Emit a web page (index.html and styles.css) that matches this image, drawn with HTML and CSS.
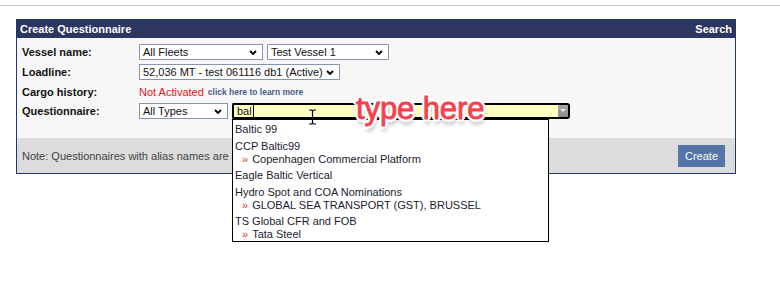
FILE: index.html
```html
<!DOCTYPE html>
<html lang="en">
<head>
  <meta charset="UTF-8">
  <title>Create Questionnaire</title>
  <link rel="stylesheet" href="styles.css">
</head>
<body>
  <div class="topline"></div>

  <div class="panel">
    <div class="panel-head">
      <span>Create Questionnaire</span>
      <span>Search</span>
    </div>

    <div class="panel-body">
      <div class="row">
        <label>Vessel name:</label>
        <div class="select fleet">All Fleets<svg class="chev" viewBox="0 0 8 5"><path d="M1 1 L4 4 L7 1"/></svg></div>
        <div class="select vessel">Test Vessel 1<svg class="chev" viewBox="0 0 8 5"><path d="M1 1 L4 4 L7 1"/></svg></div>
      </div>
      <div class="row">
        <label>Loadline:</label>
        <div class="select loadline">52,036 MT - test 061116 db1 (Active)<svg class="chev" viewBox="0 0 8 5"><path d="M1 1 L4 4 L7 1"/></svg></div>
      </div>
      <div class="row short">
        <label>Cargo history:</label>
        <span class="inactive">Not Activated</span>
        <a class="learn">click here to learn more</a>
      </div>
      <div class="row">
        <label>Questionnaire:</label>
        <div class="select types">All Types<svg class="chev" viewBox="0 0 8 5"><path d="M1 1 L4 4 L7 1"/></svg></div>
        <div class="combo">
          <div class="combo-input">bal<span class="caret"></span></div>
          <div class="combo-btn"><svg viewBox="0 0 6 4"><path d="M0 0 H6 L3 3 Z"/></svg></div>

          <svg class="ibeam" viewBox="0 0 9 16"><path d="M1 1 H3.5 L4.5 2 L5.5 1 H8 M4.5 2 V14 M1 15 H3.5 L4.5 14 L5.5 15 H8"/></svg>
          <div class="hint">type here</div>

          <ul class="suggest">
            <li>Baltic 99</li>
            <li>CCP Baltic99<span class="alias">Copenhagen Commercial Platform</span></li>
            <li>Eagle Baltic Vertical</li>
            <li>Hydro Spot and COA Nominations<span class="alias">GLOBAL SEA TRANSPORT (GST), BRUSSEL</span></li>
            <li>TS Global CFR and FOB<span class="alias">Tata Steel</span></li>
          </ul>
        </div>
      </div>
    </div>

    <div class="panel-foot">
      <span class="note">Note: Questionnaires with alias names are shown below.</span>
      <button class="create">Create</button>
    </div>
  </div>
</body>
</html>
```

FILE: styles.css
```css
* { box-sizing: border-box; }

body {
  margin: 0;
  min-height: 285px;
  background: #ffffff;
  font-family: 'Liberation Sans', Arial, sans-serif;
  font-size: 11px;
  color: #111;
}

.topline {
  margin-top: 5px;
  border-top: 1px solid #c8c8c8;
}

.panel {
  margin: 13px 0 0 16px;
  width: 720px;
  border: 1px solid #1d3a6a;
}

.panel-head {
  display: flex;
  justify-content: space-between;
  align-items: center;
  height: 18px;
  padding: 0 3px 0 3px;
  background: #2d3561;
  color: #fff;
  font-weight: bold;
  font-size: 11px;
}

.panel-body {
  background: #f7f7f7;
  padding: 6px 0 19px 5px;
}

.row {
  display: flex;
  align-items: center;
  height: 16px;
  margin-bottom: 4px;
}
.row:last-child { margin-bottom: 0; }
.row.short { height: 15px; }

.row label {
  width: 117px;
  font-weight: bold;
}

.select {
  display: flex;
  align-items: center;
  justify-content: space-between;
  height: 16px;
  padding: 0 5px 0 3px;
  margin-right: 4px;
  background: #fff;
  border: 1px solid #8795ad;
  white-space: nowrap;
}
.select.fleet { width: 124px; }
.select.vessel { width: 122px; }
.select.loadline { width: 201px; }
.select.types { width: 89px; margin-right: 4px; }

.chev {
  width: 8px;
  height: 5px;
  margin-left: 3px;
  fill: none;
  stroke: #000;
  stroke-width: 1.8;
}

.inactive { color: #e8141c; margin-right: 4px; }
.learn {
  color: #4b5d8c;
  font-weight: bold;
  font-size: 8.5px;
}

.combo {
  position: relative;
  display: flex;
  width: 338px;
  height: 16px;
}

.combo-input {
  flex: 1;
  display: flex;
  align-items: center;
  padding-left: 3px;
  background: #ffffc2;
  border: 2px solid #000;
  border-right: none;
  border-radius: 2px 0 0 2px;
}

.caret {
  display: inline-block;
  width: 1px;
  height: 12px;
  margin-left: 1px;
  background: #000;
}

.combo-btn {
  width: 12px;
  display: flex;
  align-items: center;
  justify-content: center;
  background: linear-gradient(#a8a8a8, #8a8a8a);
  border: 2px solid #000;
  border-left: none;
  border-radius: 0 3px 3px 0;
}
.combo-btn svg { width: 6px; height: 4px; fill: #e8e8e8; }

.ibeam {
  position: absolute;
  left: 76px;
  top: 6px;
  width: 9px;
  height: 16px;
  fill: none;
  stroke: #000;
  stroke-width: 1.2;
  z-index: 3;
}

.hint {
  position: absolute;
  left: 124px;
  top: -12px;
  font-family: 'Liberation Sans', Arial, sans-serif;
  font-size: 31px;
  line-height: 36px;
  letter-spacing: -0.1px;
  color: #f5404f;
  white-space: nowrap;
  z-index: 4;
  -webkit-text-stroke: 0.8px #f5404f;
  text-shadow:
    3px 0 0 #fff, -3px 0 0 #fff, 0 3px 0 #fff, 0 -3px 0 #fff,
    2px 2px 0 #fff, -2px -2px 0 #fff, 2px -2px 0 #fff, -2px 2px 0 #fff,
    1px 5px 4px rgba(0,0,0,0.4);
}

.suggest {
  position: absolute;
  left: 0;
  top: 16px;
  width: 317px;
  height: 123px;
  margin: 0;
  padding: 1px 0 0 0;
  list-style: none;
  background: #fff;
  border: 1px solid #000;
  z-index: 2;
  color: #1c1c30;
}

.suggest li {
  padding: 2px;
  line-height: 13px;
}

.alias {
  display: block;
  padding-left: 7px;
  line-height: 12px;
}
.alias::before {
  content: "\00bb";
  color: #d2401e;
  margin-right: 4px;
}

.panel-foot {
  display: flex;
  justify-content: space-between;
  align-items: center;
  height: 35px;
  padding: 0 10px 0 5px;
  background: #dcdcdc;
}

.note {
  color: #444;
  white-space: nowrap;
}

.create {
  width: 47px;
  height: 22px;
  padding: 0;
  border: none;
  background: #5574a7;
  color: #fff;
  font-family: 'Liberation Sans', Arial, sans-serif;
  font-size: 11px;
}
```
